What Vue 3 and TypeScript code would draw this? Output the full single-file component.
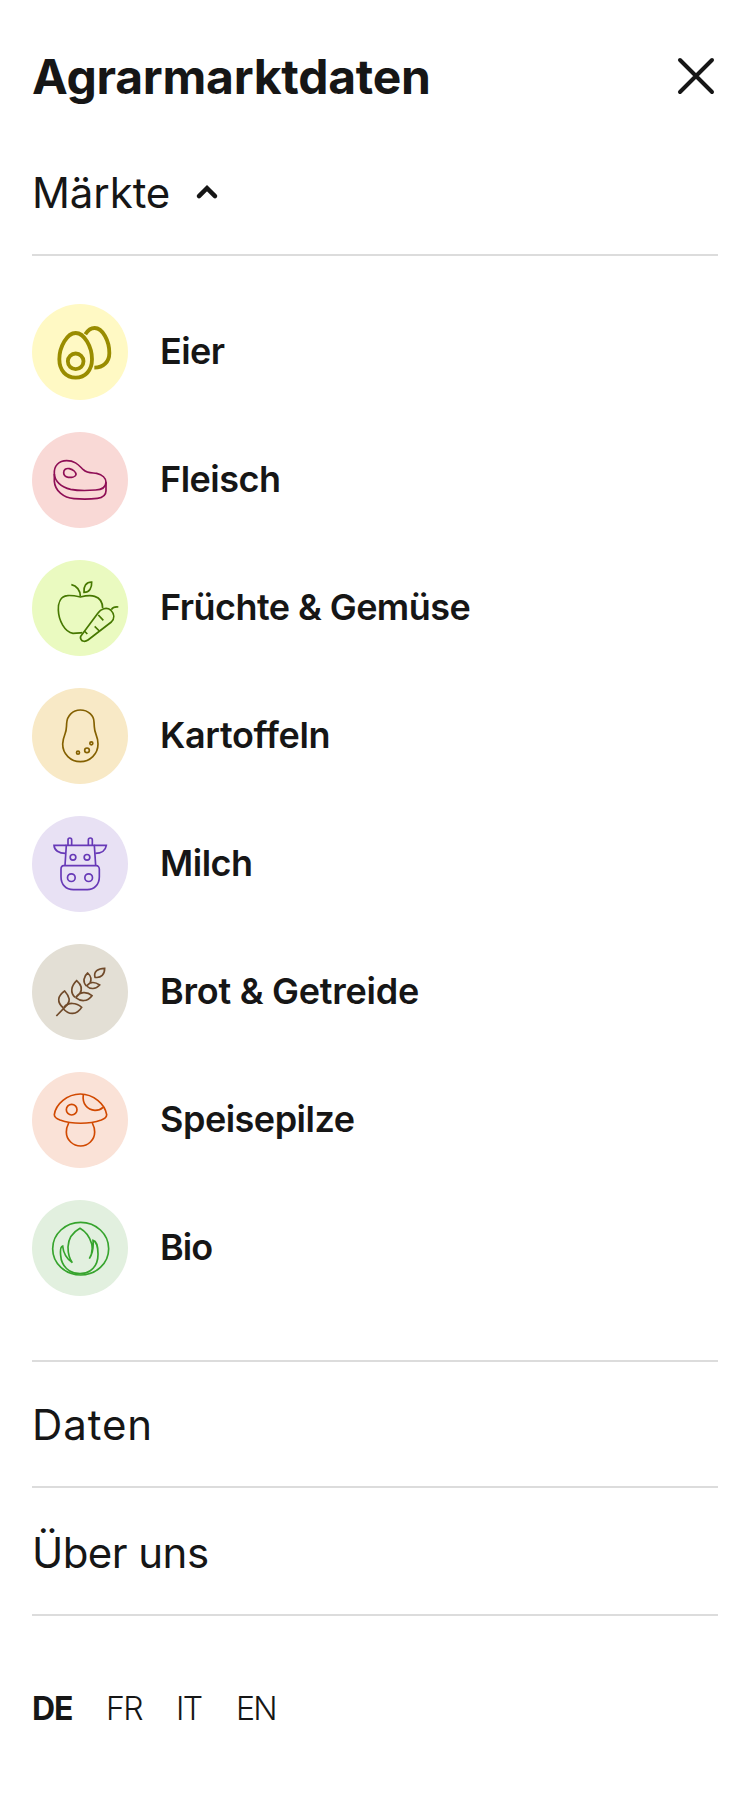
<script setup lang="ts">
import { ref } from 'vue'

interface Market {
  name: string
  tracking: number
  background: string
  color: string
  stroke: number
  paths: string[]
  circles: [number, number, number][]
}

const markets: Market[] = [
  {
    name: 'Eier', tracking: -0.6, background: '#fff9c4', color: '#998c00', stroke: 11.5,
    paths: [
      'M155 111C181 111 204 153 204 190C204 223 184 245 155 245C126 245 106 223 106 190C106 153 129 111 155 111Z',
      'M184 115C192 102 202 96 212 96C236 96 256 135 256 171C256 198 238 215 211 215',
    ],
    circles: [[155, 196, 23.5]],
  },
  {
    name: 'Fleisch', tracking: -0.5, background: '#f9d9d6', color: '#8e0e55', stroke: 5,
    paths: [
      'M91 150C89 125 105 110 128 110C155 110 165 125 178 137C190 149 205 146 218 148C235 152 246 163 246 175C245 190 235 197 215 198C190 200 165 201 140 196C110 189 92 170 91 150Z',
      'M91 150V172C93 200 118 221 150 224C175 226 205 225 220 223C240 220 246 212 246 200V175',
      'M119 146C119 137 126 132 136 134C148 137 156 145 156 152C154 158 143 161 133 160C124 158 119 153 119 146Z',
    ],
    circles: [],
  },
  {
    name: 'Früchte & Gemüse', tracking: -0.56, background: '#eafac0', color: '#467800', stroke: 5,
    paths: [
      'M142 98C158 101 169 115 169 133',
      'M203 90C186 90 178 103 180 121C196 121 204 108 203 90Z',
      'M236 169C236 152 228 138 212 133C203 130 185 131 169 135C150 131 137 130 130 131C110 133 102 152 103 175C104 205 122 240 147 244C158 244 165 243 175 242',
      'M173 249L222 183C230 170 248 165 260 174C272 186 272 200 262 210L192 264C184 270 174 269 171 262C168 257 170 252 173 249Z',
      'M223 189L238 205M212 223L226 237M181 237L190 246M262 173C266 166 274 164 283 165',
    ],
    circles: [],
  },
  {
    name: 'Kartoffeln', tracking: -0.33, background: '#f8e9c6', color: '#846000', stroke: 5,
    paths: [
      'M169 90C193 90 210 107 210 126C212 150 210 148 216 163C220 173 222 180 222 192C222 222 198 245 169 245C140 245 116 222 116 192C117 180 119 172 123 162C128 150 127 145 128 130C129 107 146 90 169 90Z',
    ],
    circles: [[162, 218, 4.5], [189, 211, 7], [202, 190, 4.5]],
  },
  {
    name: 'Milch', tracking: -0.5, background: '#e8e1f4', color: '#6739b7', stroke: 5,
    paths: [
      'M132 111V96C132 88 143 88 143 96V111M193 111V96C193 88 205 88 205 96V111',
      'M127 112H90C91 127 105 136 124 136M211 112H247C245 127 232 136 214 136',
      'M123 172L127 112H211L215 172',
      'M119 173H217C222 173 226 178 226 184V206C226 230 210 245 190 245H148C126 245 111 230 111 206V184C111 178 114 173 119 173Z',
    ],
    circles: [[147, 148, 8.5], [189, 148, 8.5], [142, 209, 11.5], [194, 209, 11.5]],
  },
  {
    name: 'Brot & Getreide', tracking: -0.25, background: '#e3dfd5', color: '#704a2a', stroke: 5,
    paths: [
      'M97 240L130 206',
      'M118 216C98 199 100 180 122 165C137 182 138 197 130 206',
      'M120 214C132 198 157 199 173 214C158 237 135 238 118 218',
      'M153 184C138 170 141 150 158 134C174 148 175 162 167 173L155 185C167 166 189 166 204 179C190 198 170 197 155 185',
      'M187 150C176 138 178 122 191 111C202 121 202 133 198 141L188 150C198 136 213 137 227 147C215 161 198 160 188 150',
      'M242 97C222 97 208 107 213 124C232 127 242 115 242 97Z',
    ],
    circles: [],
  },
  {
    name: 'Speisepilze', tracking: -0.5, background: '#fae2d7', color: '#d14900', stroke: 5,
    paths: [
      'M91 152C95 120 130 90 169 90C208 90 243 120 248 152C248 160 242 164 232 168C195 181 145 181 108 168C98 164 91 160 91 152Z',
      'M178 91C174 120 190 138 213 139C223 139 231 136 237 130',
      'M134 177C129 187 127 195 127 204C127 228 147 246 170 246C192 246 212 228 212 204C212 195 210 187 205 177',
    ],
    circles: [[143, 137, 16]],
  },
  {
    name: 'Bio', tracking: -0.9, background: '#e2f0df', color: '#36a42d', stroke: 5,
    paths: [
      'M254 170C254 214 216 249 170 249C124 249 86 214 86 170C86 126 124 91 170 91C216 91 254 126 254 170Z',
      'M145 212C132 203 118 186 116 162C108 164 109 180 110 190C112 222 135 245 168 245C200 245 223 222 222 185C222 166 217 147 207 145C209 165 207 183 196 200C203 189 206 170 203 155C196 132 184 118 168 109C146 121 133 141 132 165C132 185 136 200 145 212Z',
    ],
    circles: [],
  },
]

const languages = [
  { code: 'DE', width: 74 },
  { code: 'FR', width: 70 },
  { code: 'IT', width: 60 },
  { code: 'EN', width: 60 },
]
const activeLanguage = ref('DE')
const marketsOpen = ref(true)
</script>

<template>
  <div class="menu">
    <header class="header">
      <h1 class="title">Agrarmarktdaten</h1>
      <button class="close" aria-label="Schliessen">
        <svg width="40" height="40" viewBox="0 0 40 40"><path d="M4 4L36 36M36 4L4 36" /></svg>
      </button>
    </header>

    <nav>
      <button class="row markets-row" @click="marketsOpen = !marketsOpen">
        <span class="label">Märkte</span>
        <svg class="chevron" :class="{ closed: !marketsOpen }" width="24" height="18" viewBox="0 0 24 18">
          <path d="M4 12.2L12 4.2L20 12.2" />
        </svg>
      </button>
      <ul v-if="marketsOpen" class="markets">
        <li v-for="m in markets" :key="m.name" class="market">
          <span class="badge" :style="{ background: m.background, color: m.color }">
            <svg width="96" height="96" viewBox="24 24 288 288" :stroke-width="m.stroke">
              <path v-for="(d, i) in m.paths" :key="i" :d="d" />
              <circle v-for="([x, y, r], i) in m.circles" :key="'c' + i" :cx="x" :cy="y" :r="r" />
            </svg>
          </span>
          <span class="name" :style="{ letterSpacing: m.tracking + 'px' }">{{ m.name }}</span>
        </li>
      </ul>
      <a class="row data-row"><span class="label wide">Daten</span></a>
      <a class="row about-row"><span class="label narrow">Über uns</span></a>
    </nav>

    <footer class="languages">
      <a
        v-for="l in languages"
        :key="l.code"
        class="language"
        :class="{ active: l.code === activeLanguage }"
        :style="{ width: l.width + 'px' }"
        @click="activeLanguage = l.code"
      >{{ l.code }}</a>
    </footer>
  </div>
</template>

<style>
html,
body {
  margin: 0;
  background: #fff;
}
</style>

<style scoped>
.menu {
  box-sizing: border-box;
  width: 100%;
  min-height: 1800px;
  padding: 24px 32px 0;
  background: #fff;
  color: #161616;
  font-family: Inter, "Open Sans", sans-serif;
}
button {
  padding: 0;
  border: 0;
  background: none;
  color: inherit;
  font: inherit;
}
.header {
  display: flex;
  align-items: center;
  justify-content: space-between;
  height: 106px;
}
.title {
  margin: 0;
  font-size: 48px;
  font-weight: 700;
  line-height: 64px;
  letter-spacing: -0.25px;
}
.close {
  width: 40px;
  height: 40px;
  margin: 0 2px 2px 0;
}
.close svg,
.badge svg {
  display: block;
}
path,
circle {
  fill: none;
  stroke: currentColor;
}
.close path {
  stroke-width: 4;
  stroke-linecap: round;
}
.row {
  box-sizing: border-box;
  display: flex;
  align-items: center;
  width: 100%;
  height: 126px;
  padding-top: 1px;
  border-bottom: 2px solid #dcdcdc;
  font-size: 42px;
  line-height: 56px;
}
.markets-row {
  gap: 25px;
}
.markets-row .label {
  letter-spacing: -0.1px;
}
.chevron path {
  stroke-width: 4.5;
  stroke-linecap: round;
  stroke-linejoin: miter;
}
.chevron.closed {
  transform: rotate(180deg);
}
.wide {
  letter-spacing: 0.9px;
}
.narrow {
  letter-spacing: -0.55px;
}
.about-row {
  height: 128px;
  padding-top: 4px;
}
.markets {
  display: flex;
  flex-direction: column;
  gap: 32px;
  margin: 0;
  padding: 48px 0 64px;
  border-bottom: 2px solid #dcdcdc;
  list-style: none;
}
.market {
  display: flex;
  align-items: center;
  gap: 32px;
}
.badge {
  width: 96px;
  height: 96px;
  border-radius: 50%;
}
.name {
  padding-bottom: 2px;
  font-size: 36px;
  font-weight: 600;
  line-height: 48px;
}
.languages {
  display: flex;
  padding-top: 73px;
  font-size: 32px;
  font-weight: 300;
  line-height: 40px;
  letter-spacing: -1.7px;
}
.language.active {
  font-weight: 700;
  letter-spacing: -1px;
}
</style>
